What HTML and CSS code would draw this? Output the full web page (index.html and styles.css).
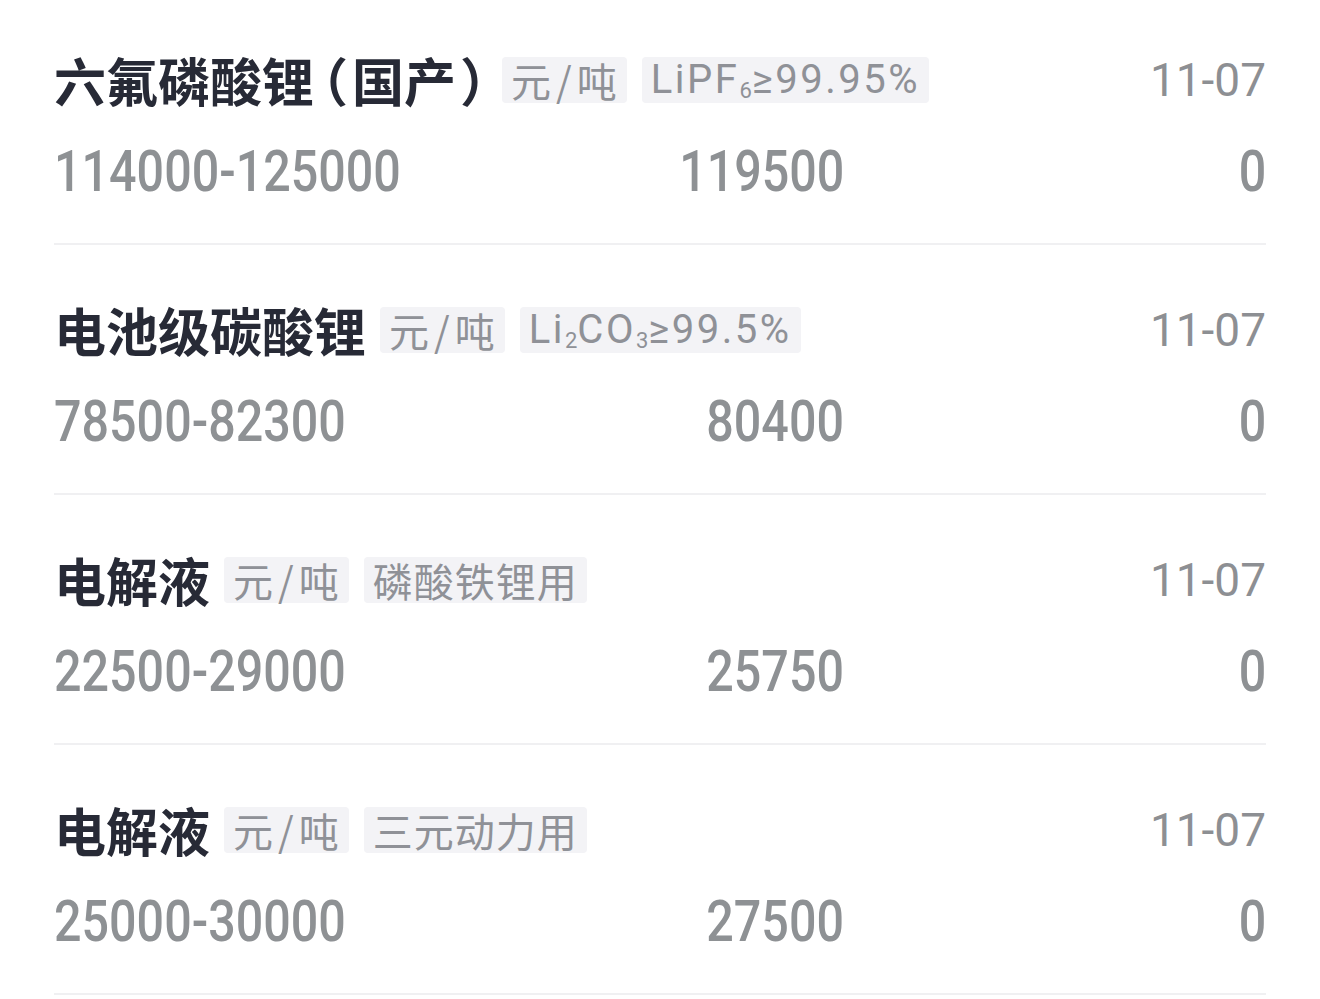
FILE: index.html
```html
<!DOCTYPE html>
<html lang="zh-CN">
<head>
<meta charset="utf-8">
<title>价格列表</title>
<link rel="stylesheet" href="styles.css">
</head>
<body>
<div class="list">
  <div class="row">
    <div class="head">
      <span class="name">六氟磷酸锂<span class="pl">（</span>国产<span class="pr">）</span></span>
      <span class="tag">元<span class="sl">/</span>吨</span>
      <span class="tag latin">LiPF<sub>6</sub>≥99.95%</span>
      <span class="date">11-07</span>
    </div>
    <div class="nums">
      <div class="cell range"><span>114000-125000</span></div>
      <div class="cell avg"><span>119500</span></div>
      <div class="cell chg"><span>0</span></div>
    </div>
  </div>
  <div class="row">
    <div class="head">
      <span class="name">电池级碳酸锂</span>
      <span class="tag">元<span class="sl">/</span>吨</span>
      <span class="tag latin">Li<sub>2</sub>CO<sub>3</sub>≥99.5%</span>
      <span class="date">11-07</span>
    </div>
    <div class="nums">
      <div class="cell range"><span>78500-82300</span></div>
      <div class="cell avg"><span>80400</span></div>
      <div class="cell chg"><span>0</span></div>
    </div>
  </div>
  <div class="row">
    <div class="head">
      <span class="name">电解液</span>
      <span class="tag">元<span class="sl">/</span>吨</span>
      <span class="tag">磷酸铁锂用</span>
      <span class="date">11-07</span>
    </div>
    <div class="nums">
      <div class="cell range"><span>22500-29000</span></div>
      <div class="cell avg"><span>25750</span></div>
      <div class="cell chg"><span>0</span></div>
    </div>
  </div>
  <div class="row">
    <div class="head">
      <span class="name">电解液</span>
      <span class="tag">元<span class="sl">/</span>吨</span>
      <span class="tag">三元动力用</span>
      <span class="date">11-07</span>
    </div>
    <div class="nums">
      <div class="cell range"><span>25000-30000</span></div>
      <div class="cell avg"><span>27500</span></div>
      <div class="cell chg"><span>0</span></div>
    </div>
  </div>
</div>
</body>
</html>
```

FILE: styles.css
```css
html, body {
  margin: 0;
  padding: 0;
  background: #ffffff;
}

body {
  font-family: "Noto Sans CJK SC", "Noto Sans", sans-serif;
  overflow: hidden;
}

.list {
  padding: 0 54px;
}

.row {
  padding: 50px 0 41px;
  border-bottom: 2px solid #f0f0f2;
}

.row:first-child {
  padding-top: 45px;
}

.head {
  display: flex;
  align-items: center;
  height: 70px;
}

.name {
  font-size: 52px;
  font-weight: 700;
  color: #272a36;
  line-height: 70px;
  margin-right: 14px;
  white-space: nowrap;
}

.name .pl,
.name .pr {
  font-feature-settings: "halt" 1;
}

.name .pl {
  margin: 0 4px 0 8px;
}

.name .pr {
  margin: 0 2px 0 4px;
}

.tag {
  display: block;
  height: 46px;
  line-height: 46px;
  padding: 0 9px;
  margin-right: 15px;
  background: #f3f3f6;
  border-radius: 4px;
  color: #8f9197;
  font-size: 40px;
  letter-spacing: 1px;
  font-weight: 400;
  font-family: "Noto Sans CJK SC", sans-serif;
  white-space: nowrap;
}

.tag .sl {
  margin: 0 4px;
}

.tag.latin {
  font-family: "Roboto", "Noto Sans CJK SC", sans-serif;
  letter-spacing: 2.5px;
}

.tag sub {
  font-size: 22px;
  vertical-align: -5px;
  line-height: 0;
  letter-spacing: 0;
}

.date {
  margin-left: auto;
  font-family: "Roboto", "Noto Sans", sans-serif;
  font-size: 46px;
  color: #8d8f93;
  line-height: 70px;
}

.nums {
  display: grid;
  grid-template-columns: minmax(0, 1fr) minmax(0, 1fr) minmax(0, 1fr);
  margin-top: 27px;
  height: 60px;
  line-height: 60px;
  font-family: "Roboto", sans-serif;
  font-size: 57px;
  font-weight: 500;
  color: #8e9194;
}

.cell {
  white-space: nowrap;
}

.cell span {
  display: inline-block;
  transform: scaleX(0.85);
}

.range {
  text-align: left;
}

.range span {
  transform-origin: left center;
}

.avg {
  text-align: right;
  padding-right: 18px;
}

.avg span,
.chg span {
  transform-origin: right center;
}

.chg {
  text-align: right;
}
```
